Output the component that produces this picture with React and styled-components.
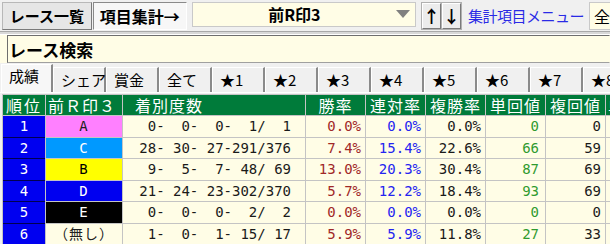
import React from "react";
import styled, { createGlobalStyle } from "styled-components";

const GlobalStyle = createGlobalStyle`
  body {
    margin: 0;
    background: #f0f0f0;
    font-family: "Noto Sans CJK JP", sans-serif;
  }
`;

const jp = `"Noto Sans CJK JP", sans-serif`;
const mono = `"DejaVu Sans Mono", "Noto Sans CJK JP", monospace`;

const Page = styled.div`
  width: 610px;
  height: 244px;
  overflow: hidden;
  background: #f0f0f0;
`;

const TopBar = styled.div`
  display: flex;
  align-items: center;
  height: 31px;
  padding-left: 2px;
  white-space: nowrap;
`;

const ToolButton = styled.div`
  height: 28px;
  width: ${p => p.w}px;
  box-sizing: border-box;
  display: flex;
  align-items: center;
  justify-content: center;
  font-family: ${jp};
  font-weight: bold;
  font-size: ${p => p.size || 15}px;
  color: #000;
  margin-right: ${p => p.mr || 0}px;
  background: ${p => (p.pressed ? "#f7f7f7" : "#e6e6e6")};
  border: 1px solid;
  border-color: ${p =>
    p.pressed ? "#8a8a8a #ffffff #ffffff #8a8a8a" : "#b8b8b8 #7a7a7a #7a7a7a #b8b8b8"};
`;

const Combo = styled.div`
  width: 232px;
  height: 25px;
  box-sizing: border-box;
  margin: 0 6px 3px 0;
  background: #fffde6;
  border: 1px solid #c9c9c9;
  display: flex;
  align-items: center;
  font-family: ${jp};
  font-weight: bold;
  font-size: 16px;
`;

const ComboText = styled.span`
  flex: 1;
  text-align: center;
`;

const ComboArrow = styled.svg`
  width: 14px;
  height: 8px;
  margin-right: 5px;
`;

const ArrowButton = styled.div`
  width: 19px;
  height: 26px;
  box-sizing: border-box;
  display: flex;
  align-items: center;
  justify-content: center;
  background: #ececec;
  border: 1px solid;
  border-color: #ffffff #7a7a7a #7a7a7a #ffffff;
  box-shadow: 0 0 0 1px #b0b0b0;
  margin-left: ${p => p.ml || 0}px;
  font-family: ${jp};
  font-weight: bold;
  font-size: 17px;
`;

const MenuLink = styled.span`
  margin-left: 7px;
  font-family: ${jp};
  font-size: 15px;
  color: #2a2ae6;
  letter-spacing: -0.5px;
`;

const SideBox = styled.div`
  margin-left: 5px;
  height: 26px;
  flex: 1;
  background: #fffde6;
  border: 1px solid #c9c9c9;
  border-right: none;
  font-family: ${jp};
  font-size: 16px;
  display: flex;
  align-items: center;
  padding-left: 4px;
`;

const Divider = styled.div`
  height: 4px;
  border-top: 1px solid #a8a8a8;
  border-bottom: 1px solid #ffffff;
  background: #d8d8d8;
  box-sizing: border-box;
`;

const SearchRow = styled.div`
  height: 28px;
  background: #fffde6;
  padding-left: 7px;
  box-sizing: border-box;
  display: flex;
`;

const SearchBox = styled.div`
  flex: 1;
  border: 1px solid;
  border-color: #6e6e6e transparent #a0a0a0 #6e6e6e;
  font-family: ${jp};
  font-weight: bold;
  font-size: 17px;
  display: flex;
  align-items: center;
  padding-left: 1px;
`;

const TabStrip = styled.div`
  display: flex;
  align-items: flex-end;
  height: 30px;
  padding-left: 1px;
  border-bottom: 1px solid #ffffff;
  box-sizing: border-box;
`;

const Tab = styled.div`
  width: ${p => (p.active ? 52 : 53)}px;
  height: ${p => (p.active ? 28 : 25)}px;
  box-sizing: border-box;
  flex-shrink: 0;
  padding: ${p => (p.active ? "2px 0 0 7px" : "3px 0 0 7px")};
  font-family: ${jp};
  font-size: 15px;
  line-height: 18px;
  background: ${p => (p.active ? "#f7f7f7" : "#f0f0f0")};
  border-left: 1px solid #ffffff;
  border-top: 1px solid #ffffff;
  border-right: 2px solid #8a8a8a;
  white-space: nowrap;
`;

const TableWrap = styled.div`
  padding-left: 2px;
  padding-top: 1px;
`;

const Grid = styled.div`
  display: grid;
  grid-template-columns: 42px 76px 182px 59px 59px 59px 59px 59px 60px;
  grid-template-rows: 20px;
  grid-auto-rows: 20.6px;
  gap: 1px;
  background: #c4c4c4;
  border: 1px solid #c4c4c4;
  width: max-content;
`;

const HeadCell = styled.div`
  background: #007b3a;
  color: #ffffff;
  font-family: ${jp};
  font-size: 16px;
  letter-spacing: ${p => p.ls || 0}px;
  line-height: 20px;
  white-space: nowrap;
  text-align: ${p => p.align || "center"};
  padding-left: ${p => p.pl || 0}px;
`;

const RankCell = styled.div`
  background: #0000f0;
  color: #ffffff;
  font-family: ${mono};
  font-size: 14px;
  text-align: center;
  line-height: 20px;
  box-shadow: 0 1px 0 #000050;
`;

const MarkCell = styled.div`
  background: ${p => p.bg};
  color: ${p => p.fg};
  font-family: ${mono};
  font-size: 14px;
  text-align: center;
  line-height: 20px;
  letter-spacing: 1px;
`;

const DataCell = styled.div`
  background: #fffde6;
  color: ${p => p.fg || "#1a1a1a"};
  font-family: ${mono};
  font-size: 14px;
  line-height: 20px;
  text-align: right;
  padding-right: ${p => p.pr || 4}px;
  white-space: pre;
`;

const tabs = ["成績", "シェア", "賞金", "全て", "★1", "★2", "★3", "★4", "★5", "★6", "★7", "★8"];

const rows = [
  { rank: 1, mark: "A", bg: "#ff80ff", fg: "#202020", count: " 0-  0-  0-  1/  1", win: "0.0%", ren: "0.0%", fuku: "0.0%", tan: "0", fkv: "0" },
  { rank: 2, mark: "C", bg: "#0099ff", fg: "#ffffff", count: "28- 30- 27-291/376", win: "7.4%", ren: "15.4%", fuku: "22.6%", tan: "66", fkv: "59" },
  { rank: 3, mark: "B", bg: "#ffff00", fg: "#000000", count: " 9-  5-  7- 48/ 69", win: "13.0%", ren: "20.3%", fuku: "30.4%", tan: "87", fkv: "69" },
  { rank: 4, mark: "D", bg: "#0000f0", fg: "#ffffff", count: "21- 24- 23-302/370", win: "5.7%", ren: "12.2%", fuku: "18.4%", tan: "93", fkv: "69" },
  { rank: 5, mark: "E", bg: "#000000", fg: "#ffffff", count: " 0-  0-  0-  2/  2", win: "0.0%", ren: "0.0%", fuku: "0.0%", tan: "0", fkv: "0" },
  { rank: 6, mark: "（無し）", bg: "#fffde6", fg: "#202020", count: " 1-  0-  1- 15/ 17", win: "5.9%", ren: "5.9%", fuku: "11.8%", tan: "27", fkv: "33" },
];

const App = () => {
  return (
    <Page>
      <GlobalStyle />
      <TopBar>
        <ToolButton w={93} mr={1}>レース一覧</ToolButton>
        <ToolButton w={97} mr={5} size={16} pressed>項目集計→</ToolButton>
        <Combo>
          <ComboText>前R印3</ComboText>
          <ComboArrow viewBox="0 0 14 8">
            <path d="M0 0 L14 0 L7 8 Z" fill="#808080" />
          </ComboArrow>
        </Combo>
        <ArrowButton>↑</ArrowButton>
        <ArrowButton ml={1}>↓</ArrowButton>
        <MenuLink>集計項目メニュー</MenuLink>
        <SideBox>全</SideBox>
      </TopBar>
      <Divider />
      <SearchRow>
        <SearchBox>レース検索</SearchBox>
      </SearchRow>
      <TabStrip>
        {tabs.map((t, i) => (
          <Tab key={t} active={i === 0}>{t}</Tab>
        ))}
      </TabStrip>
      <TableWrap>
        <Grid>
          <HeadCell ls={2}>順位</HeadCell>
          <HeadCell align="left" pl={2} ls={1}>前Ｒ印３</HeadCell>
          <HeadCell align="left" pl={12} ls={1}>着別度数</HeadCell>
          <HeadCell ls={1}>勝率</HeadCell>
          <HeadCell ls={1}>連対率</HeadCell>
          <HeadCell ls={1}>複勝率</HeadCell>
          <HeadCell ls={1}>単回値</HeadCell>
          <HeadCell ls={1}>複回値</HeadCell>
          <HeadCell align="left" pl={2}>単</HeadCell>
          {rows.map(r => (
            <React.Fragment key={r.rank}>
              <RankCell>{r.rank}</RankCell>
              <MarkCell bg={r.bg} fg={r.fg}>{r.mark}</MarkCell>
              <DataCell pr={14}>{r.count}</DataCell>
              <DataCell fg="#a02828">{r.win}</DataCell>
              <DataCell fg="#2424f0">{r.ren}</DataCell>
              <DataCell>{r.fuku}</DataCell>
              <DataCell fg="#2f9a2f" pr={6}>{r.tan}</DataCell>
              <DataCell pr={4}>{r.fkv}</DataCell>
              <DataCell />
            </React.Fragment>
          ))}
        </Grid>
      </TableWrap>
    </Page>
  );
};

export default App;
